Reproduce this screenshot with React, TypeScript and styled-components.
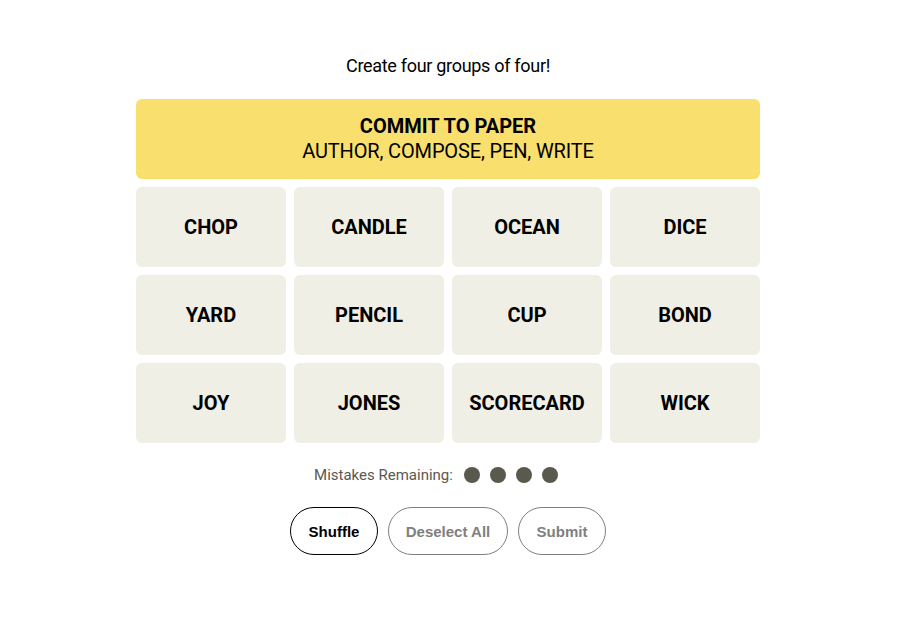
import styled, { createGlobalStyle } from "styled-components";

const GlobalStyle = createGlobalStyle`
  html, body {
    margin: 0;
    padding: 0;
    background: #ffffff;
  }
  body {
    font-family: Roboto, "Liberation Sans", sans-serif;
    color: #000000;
  }
`;

const groups = [
  { title: "COMMIT TO PAPER", members: "AUTHOR, COMPOSE, PEN, WRITE", color: "#f9df6d" },
];

const words = [
  "CHOP", "CANDLE", "OCEAN", "DICE",
  "YARD", "PENCIL", "CUP", "BOND",
  "JOY", "JONES", "SCORECARD", "WICK",
];

const Page = styled.main`
  width: 896px;
  display: flex;
  flex-direction: column;
  align-items: center;
  padding-top: 54px;
`;

const Prompt = styled.p`
  margin: 0 0 21px;
  font-size: 18px;
  line-height: 24px;
  letter-spacing: -0.3px;
`;

const Board = styled.div`
  width: 624px;
  display: grid;
  grid-template-columns: repeat(4, 150px);
  grid-auto-rows: 80px;
  gap: 8px;
`;

const Solved = styled.div<{ $color: string }>`
  grid-column: 1 / -1;
  background: ${(p) => p.$color};
  border-radius: 6px;
  display: flex;
  flex-direction: column;
  align-items: center;
  justify-content: center;
  font-size: 20px;
  line-height: 25px;
`;

const SolvedTitle = styled.div`
  font-weight: 700;
`;

const SolvedMembers = styled.div`
  font-weight: 400;
  letter-spacing: -0.15px;
`;

const Tile = styled.button`
  border: none;
  background: #efefe6;
  border-radius: 6px;
  font-family: Roboto, "Liberation Sans", sans-serif;
  font-size: 20px;
  font-weight: 700;
  color: #000000;
  display: flex;
  align-items: center;
  justify-content: center;
  padding: 0 0 1px;
`;

const Mistakes = styled.div`
  margin-top: 22px;
  margin-right: 24px;
  display: flex;
  align-items: center;
  gap: 10px;
  font-size: 15px;
  color: #5a594e;
  height: 20px;
`;

const Dots = styled.div`
  display: flex;
  gap: 10px;
  margin-left: 1px;
`;

const Dot = styled.span`
  width: 16px;
  height: 16px;
  border-radius: 50%;
  background: #5a594e;
`;

const Controls = styled.div`
  margin-top: 22px;
  display: flex;
  gap: 10px;
`;

const Pill = styled.button<{ $active?: boolean; $w: number }>`
  width: ${(p) => p.$w}px;
  height: 48px;
  border-radius: 24px;
  background: #ffffff;
  border: 1px solid ${(p) => (p.$active ? "#000000" : "#7f7f7f")};
  color: ${(p) => (p.$active ? "#000000" : "#7f7f7f")};
  font-family: "Liberation Sans", Arial, sans-serif;
  font-size: 15px;
  font-weight: 700;
  padding: 0;
`;

export default function App() {
  return (
    <>
      <GlobalStyle />
      <Page>
        <Prompt>Create four groups of four!</Prompt>
        <Board>
          {groups.map((g) => (
            <Solved key={g.title} $color={g.color}>
              <SolvedTitle>{g.title}</SolvedTitle>
              <SolvedMembers>{g.members}</SolvedMembers>
            </Solved>
          ))}
          {words.map((w) => (
            <Tile key={w}>{w}</Tile>
          ))}
        </Board>
        <Mistakes>
          Mistakes Remaining:
          <Dots>
            <Dot />
            <Dot />
            <Dot />
            <Dot />
          </Dots>
        </Mistakes>
        <Controls>
          <Pill $active $w={88}>Shuffle</Pill>
          <Pill $w={120}>Deselect All</Pill>
          <Pill $w={88}>Submit</Pill>
        </Controls>
      </Page>
    </>
  );
}
